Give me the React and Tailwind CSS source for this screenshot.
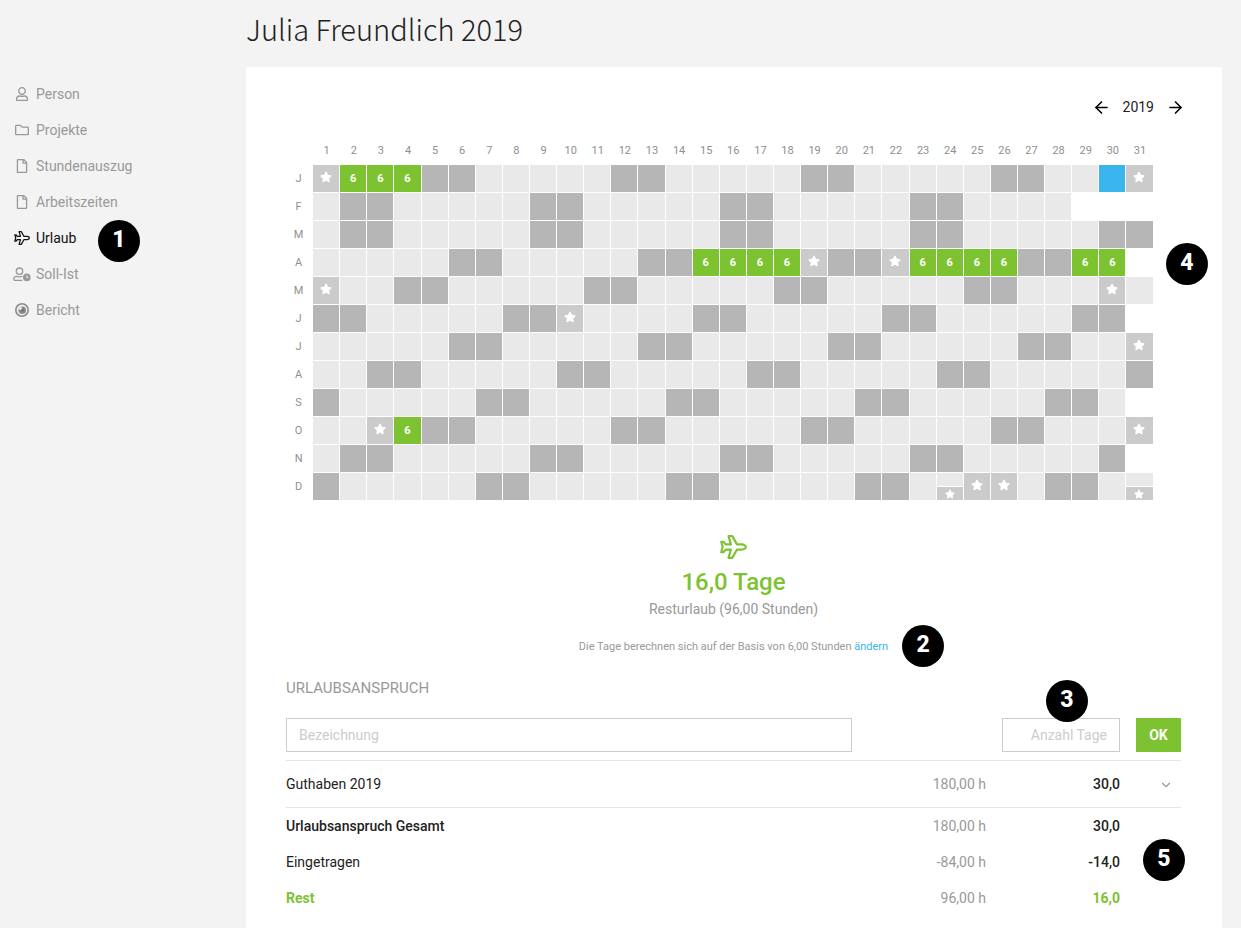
import React, { useState } from 'react';
import { ArrowLeft, ArrowRight, ChevronDown } from 'lucide-react';
import { FaRegUser, FaRegFolder, FaRegFile, FaStar } from 'react-icons/fa';

const PlaneIcon = ({ className }) => (
  <svg viewBox="0 0 576 512" className={className} fill="none" stroke="currentColor" strokeWidth="46" strokeLinejoin="round" aria-hidden="true">
    <path d="M472 200H362L262 24H182L232 200H120L72 144H26L58 256L26 368H72L120 312H232L182 488H262L362 312H472C514 312 552 280 552 256S514 200 472 200Z" />
  </svg>
);

const UserClockIcon = ({ className }) => (
  <svg viewBox="0 0 18 15" className={className} aria-hidden="true">
    <g fill="none" stroke="currentColor" strokeWidth="1.3" strokeLinecap="round">
      <circle cx="6.5" cy="4.2" r="3.2" />
      <path d="M9 13.3H1.6a.8.8 0 0 1-.8-.8c0-1.9 1.4-3.1 3.2-3.1.9 0 1.4.4 2.5.4s1.6-.4 2.5-.4" />
    </g>
    <circle cx="13.8" cy="10.4" r="3.8" fill="currentColor" />
    <path d="M13.8 8.4v2.2h1.5" fill="none" stroke="#f3f3f3" strokeWidth="0.9" />
  </svg>
);

const ReportIcon = ({ className }) => (
  <svg viewBox="0 0 16 16" className={className} aria-hidden="true">
    <circle cx="8" cy="8" r="6.2" fill="none" stroke="currentColor" strokeWidth="1.6" />
    <circle cx="8.3" cy="8.2" r="3.8" fill="currentColor" />
    <circle cx="6.6" cy="6.4" r="1.5" fill="#f3f3f3" />
    <circle cx="8.5" cy="8.2" r="1.6" fill="#777" />
  </svg>
);

const navItems = [
  { label: 'Person', icon: FaRegUser, size: 'size-3.5' },
  { label: 'Projekte', icon: FaRegFolder, size: 'size-3.5' },
  { label: 'Stundenauszug', icon: FaRegFile, size: 'size-3.5' },
  { label: 'Arbeitszeiten', icon: FaRegFile, size: 'size-3.5' },
  { label: 'Urlaub', icon: PlaneIcon, size: 'w-4 h-3.5', active: true },
  { label: 'Soll-Ist', icon: UserClockIcon, size: 'w-[18px] h-[15px]' },
  { label: 'Bericht', icon: ReportIcon, size: 'size-4 text-[#8a8a8a]' },
];

const YEAR = 2019;
const months = ['J', 'F', 'M', 'A', 'M', 'J', 'J', 'A', 'S', 'O', 'N', 'D'];
const days = Array.from({ length: 31 }, (_, i) => i + 1);

// days per month, January first
const vacation = { 0: [2, 3, 4], 3: [15, 16, 17, 18, 23, 24, 25, 26, 29, 30], 9: [4] };
const holidays = { 0: [1, 31], 3: [19, 22], 4: [1, 30], 5: [10], 6: [31], 9: [3, 31], 11: [25, 26] };
const halfHolidays = { 11: [24, 31] };
const marked = { 0: [30] };

const has = (map, month, day) => (map[month] || []).includes(day);

const dayType = (month, day) => {
  const date = new Date(YEAR, month, day);
  if (date.getMonth() !== month) return 'none';
  if (has(marked, month, day)) return 'marked';
  if (has(vacation, month, day)) return 'vacation';
  if (has(holidays, month, day)) return 'holiday';
  if (has(halfHolidays, month, day)) return 'half';
  return date.getDay() === 0 || date.getDay() === 6 ? 'weekend' : 'work';
};

const dayColors = {
  none: '',
  marked: 'bg-[#39b4ec]',
  vacation: 'bg-[#7dc331]',
  holiday: 'bg-[#cbcbcb]',
  half: 'bg-[#e9e9e9]',
  weekend: 'bg-[#b6b6b6]',
  work: 'bg-[#e9e9e9]',
};

const Badge = ({ children, className }) => (
  <span className={`absolute z-10 flex size-[42px] items-center justify-center rounded-full bg-black pb-0.5 text-[23px] font-extrabold text-white ${className}`}>
    {children}
  </span>
);

const DayCell = ({ type }) => (
  <td className={`h-7 border-r border-b border-white p-0 ${dayColors[type]}`}>
    {type === 'vacation' && <span className="block text-center text-[11px] font-bold text-white">6</span>}
    {type === 'holiday' && <FaStar className="mx-auto mb-1 size-3 text-white" />}
    {type === 'half' && (
      <div className="flex h-[27px] flex-col justify-end">
        <div className="flex h-3.5 items-center justify-center border-t border-white bg-[#cbcbcb]">
          <FaStar className="size-2.5 text-white" />
        </div>
      </div>
    )}
  </td>
);

const Calendar = () => (
  <div className="relative mt-3.5">
    <table className="w-full table-fixed border-separate border-spacing-0 text-[11px] text-[#8f8f8f]">
      <thead>
        <tr className="h-7">
          <td />
          {days.map(d => <th key={d} className="p-0 font-normal">{d}</th>)}
          <td />
        </tr>
      </thead>
      <tbody>
        {months.map((name, month) => (
          <tr key={month}>
            <th className="p-0 pr-0.5 text-center font-normal">{name}</th>
            {days.map(d => <DayCell key={d} type={dayType(month, d)} />)}
            <td />
          </tr>
        ))}
      </tbody>
    </table>
    <Badge className="top-[106px] -right-[27px]">4</Badge>
  </div>
);

const totals = [
  { label: 'Urlaubsanspruch Gesamt', hours: '180,00 h', days: '30,0', style: 'font-medium' },
  { label: 'Eingetragen', hours: '-84,00 h', days: '-14,0', style: '' },
  { label: 'Rest', hours: '96,00 h', days: '16,0', style: 'font-bold text-[#7dc331]' },
];

const App = () => {
  const [name, setName] = useState('');
  const [amount, setAmount] = useState('');

  return (
    <div className="flex min-h-screen bg-[#f3f3f3] pr-[19px] font-[Roboto,sans-serif] text-sm text-[#222]">
      <nav className="w-[246px] shrink-0 pt-[76px] pl-3">
        <ul>
          {navItems.map(({ label, icon: Icon, size, active }) => (
            <li key={label} className="flex">
              <a href="#" className={`relative flex h-9 items-center gap-1 ${active ? 'text-[#111]' : 'text-[#999]'}`}>
                <span className="flex w-5 justify-center"><Icon className={`shrink-0 ${size}`} /></span>
                {label}
                {active && <Badge className="top-0 left-[86px]">1</Badge>}
              </a>
            </li>
          ))}
        </ul>
      </nav>

      <main className="flex min-w-0 flex-1 flex-col">
        <h1 className="flex h-[67px] items-center pb-2.5 font-['Noto_Sans_CJK_JP',sans-serif] text-[29px] font-light">Julia Freundlich {YEAR}</h1>

        <div className="flex-1 bg-white pt-6 pr-[41px] pl-10">
          <div className="-mr-1 flex h-8 items-center justify-end gap-3">
            <button type="button" aria-label="Vorheriges Jahr"><ArrowLeft size={19} className="text-black" /></button>
            <span>{YEAR}</span>
            <button type="button" aria-label="Nächstes Jahr"><ArrowRight size={19} className="text-black" /></button>
          </div>

          <Calendar />

          <section className="mt-[34px] flex flex-col items-center text-[#999]">
            <PlaneIcon className="h-6 w-[27px] text-[#7dc331]" />
            <p className="mt-[7px] text-2xl font-medium text-[#7dc331]">16,0 Tage</p>
            <p className="mt-px">Resturlaub (96,00 Stunden)</p>
            <div className="relative mt-5 text-[11px] leading-4">
              Die Tage berechnen sich auf der Basis von 6,00 Stunden <a href="#" className="text-[#39b4ec]">ändern</a>
              <Badge className="-top-3.5 left-full ml-3.5">2</Badge>
            </div>
          </section>

          <section>
            <h2 className="mt-[23px] text-[15px] leading-5 text-[#999] uppercase">Urlaubsanspruch</h2>
            <form onSubmit={e => e.preventDefault()} className="mt-5 flex h-[34px]">
              <input type="text" aria-label="Bezeichnung" placeholder="Bezeichnung" value={name} onChange={e => setName(e.target.value)}
                className="mr-[150px] min-w-0 flex-1 border border-[#ccc] px-3 placeholder:text-[#ccc]" />
              <div className="relative mr-4 flex w-[118px]">
                <input type="text" aria-label="Anzahl Tage" placeholder="Anzahl Tage" value={amount} onChange={e => setAmount(e.target.value)}
                  className="w-full border border-[#ccc] px-3 text-right placeholder:text-[#ccc]" />
                <Badge className="-top-[38px] left-11">3</Badge>
              </div>
              <button type="submit" className="w-[45px] bg-[#7dc331] font-bold text-white">OK</button>
            </form>

            <div className="relative mt-2">
              <table className="w-full table-fixed border-separate border-spacing-0 text-left">
                <colgroup>
                  <col />
                  <col className="w-[134px]" />
                  <col className="w-[134px]" />
                  <col className="w-[61px]" />
                </colgroup>
                <tbody>
                  <tr className="h-12 [&>*]:border-y [&>*]:border-[#e6e6e6]">
                    <th className="font-normal">Guthaben {YEAR}</th>
                    <td className="text-right text-[#999]">180,00 h</td>
                    <td className="text-right font-medium">30,0</td>
                    <td className="text-right">
                      <button type="button" aria-label="Details" className="mr-2 align-middle text-[#999]"><ChevronDown size={14} /></button>
                    </td>
                  </tr>
                  {totals.map(t => (
                    <tr key={t.label} className="h-9">
                      <th className={t.style || 'font-normal'}>{t.label}</th>
                      <td className="text-right text-[#999]">{t.hours}</td>
                      <td className={`text-right ${t.style || 'font-medium'}`}>{t.days}</td>
                      <td />
                    </tr>
                  ))}
                </tbody>
              </table>
              <Badge className="-right-1 bottom-[35px]">5</Badge>
            </div>
          </section>
        </div>
      </main>
    </div>
  );
};

export default App;
